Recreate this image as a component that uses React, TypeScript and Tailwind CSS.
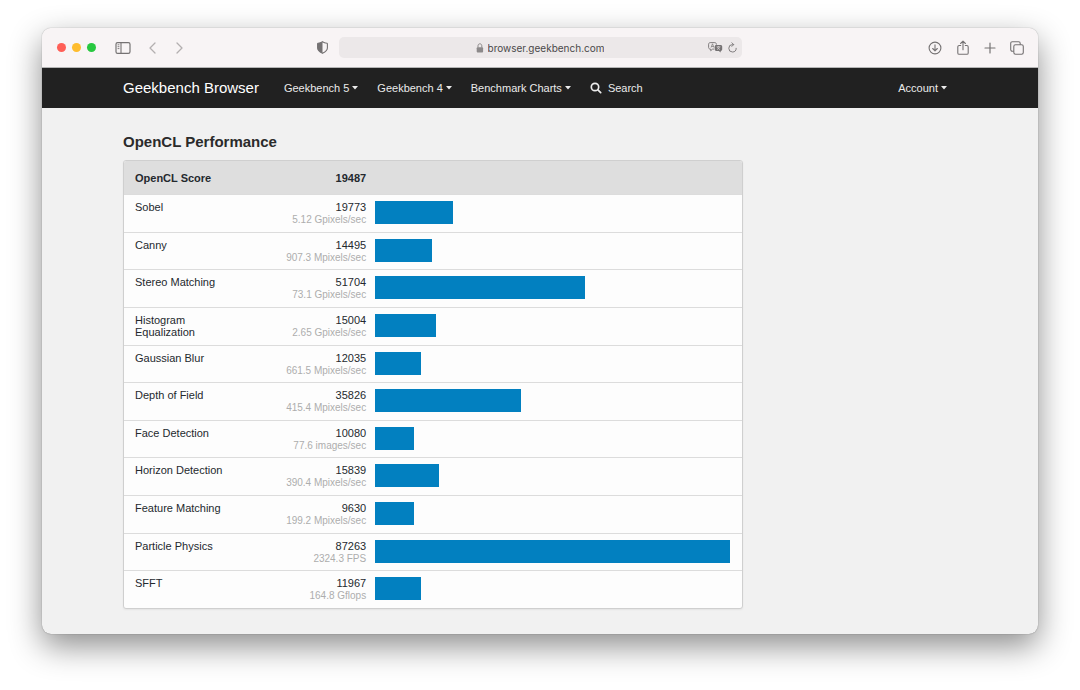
type Result = { name: string; score: number; rate: string };

const results: Result[] = [
  { name: "Sobel", score: 19773, rate: "5.12 Gpixels/sec" },
  { name: "Canny", score: 14495, rate: "907.3 Mpixels/sec" },
  { name: "Stereo Matching", score: 51704, rate: "73.1 Gpixels/sec" },
  { name: "Histogram Equalization", score: 15004, rate: "2.65 Gpixels/sec" },
  { name: "Gaussian Blur", score: 12035, rate: "661.5 Mpixels/sec" },
  { name: "Depth of Field", score: 35826, rate: "415.4 Mpixels/sec" },
  { name: "Face Detection", score: 10080, rate: "77.6 images/sec" },
  { name: "Horizon Detection", score: 15839, rate: "390.4 Mpixels/sec" },
  { name: "Feature Matching", score: 9630, rate: "199.2 Mpixels/sec" },
  { name: "Particle Physics", score: 87263, rate: "2324.3 FPS" },
  { name: "SFFT", score: 11967, rate: "164.8 Gflops" },
];

const maxScore = Math.max(...results.map(r => r.score));

const menus = ["Geekbench 5", "Geekbench 4", "Benchmark Charts"];

function MenuButton({ label }: { label: string }) {
  return (
    <button className="flex items-center gap-[3px] whitespace-nowrap">
      {label}
      <svg width="6" height="4" viewBox="0 0 6 4" fill="currentColor" aria-hidden="true"><path d="M0 0h6L3 3.4z" /></svg>
    </button>
  );
}

function Toolbar() {
  return (
    <div className="flex h-10 items-center border-b border-[#b5b5b5] bg-[#f8f4f5] text-[#757273]">
      <div className="flex flex-1 items-center pl-[15px] pr-[11px]">
        <div className="flex gap-[6px]">
          <button aria-label="Close" className="size-[9px] rounded-full bg-[#ff5f57]" />
          <button aria-label="Minimize" className="size-[9px] rounded-full bg-[#febc2e]" />
          <button aria-label="Zoom" className="size-[9px] rounded-full bg-[#28c840]" />
        </div>
        <button aria-label="Sidebar" className="ml-[19px]">
          <svg width="16" height="12" viewBox="0 0 16 12" fill="none" stroke="currentColor">
            <rect x="1" y="0.6" width="14" height="10.8" rx="1.6" strokeWidth="1.2" />
            <path d="M6 0.6v10.8" strokeWidth="1.1" />
            <path d="M2.6 2.8h1.8M2.6 4.7h1.8M2.6 6.6h1.8" strokeWidth="0.9" />
          </svg>
        </button>
        <div className="ml-[18px] flex gap-5 text-[#b3afb0]">
          <button aria-label="Back">
            <svg width="7" height="12" viewBox="0 0 7 12" fill="none" stroke="currentColor" strokeWidth="1.3" strokeLinecap="round" strokeLinejoin="round"><path d="M6 1 1 6l5 5" /></svg>
          </button>
          <button aria-label="Forward">
            <svg width="7" height="12" viewBox="0 0 7 12" fill="none" stroke="currentColor" strokeWidth="1.3" strokeLinecap="round" strokeLinejoin="round"><path d="m1 1 5 5-5 5" /></svg>
          </button>
        </div>
        <button aria-label="Privacy report" className="ml-auto">
          <svg width="11" height="13" viewBox="0 0 11 13" fill="none">
            <path d="M5.5.7C4.3 1.5 2.7 2 1 2.2.7 2.3.6 2.5.6 2.8v4.1c0 2.4 2.2 4 4.9 5.4 2.7-1.4 4.9-3 4.9-5.4V2.8c0-.3-.1-.5-.4-.6C8.3 2 6.7 1.5 5.5.7z" stroke="currentColor" strokeWidth="1.1" />
            <path d="M5.5.7C4.3 1.5 2.7 2 1 2.2c-.3.1-.4.3-.4.6v4.1c0 2.4 2.2 4 4.9 5.4z" fill="currentColor" />
          </svg>
        </button>
      </div>

      <div className="flex h-[21px] w-[403px] items-center rounded-[5px] bg-[#ece8e9] px-[5px]">
        <div className="w-8" />
        <label className="flex flex-1 items-center justify-center gap-1">
          <svg width="8" height="10" viewBox="0 0 8 10" fill="none" className="text-[#8c898a]" aria-hidden="true">
            <rect x="0.7" y="4.3" width="6.4" height="5.2" rx="0.9" fill="currentColor" />
            <path d="M2 4.6V2.8C2 1.6 2.8.8 3.9.8s1.9.8 1.9 2v1.8" stroke="currentColor" />
          </svg>
          <input
            type="text"
            aria-label="Address"
            defaultValue="browser.geekbench.com"
            className="field-sizing-content bg-transparent font-[Inter,sans-serif] text-[10px] leading-4 text-[#4b494a] outline-none"
          />
        </label>
        <div className="flex w-8 items-center justify-end gap-[5px]">
          <button aria-label="Translate">
            <svg width="15" height="11" viewBox="0 0 15 11" fill="none">
              <path d="M6 7.1H4.6L2.7 8.7V7.1h-.5C1.3 7.1.6 6.4.6 5.5V2.2C.6 1.3 1.3.6 2.2.6h4.6c.9 0 1.6.7 1.6 1.6v.5" stroke="currentColor" strokeWidth="0.9" strokeLinejoin="round" />
              <path d="m3 5.6 1.5-3.8L6 5.6M3.5 4.5h2" stroke="currentColor" strokeWidth="0.7" />
              <path d="M8.3 3h4.2c1 0 1.7.7 1.7 1.6v2.7c0 .9-.7 1.6-1.5 1.6v1.7L10.8 8.9H8.3c-.9 0-1.6-.7-1.6-1.6V4.6C6.7 3.7 7.4 3 8.3 3z" fill="currentColor" />
              <path d="M8.6 4.8h3.8M10.5 4v.8M11.6 4.9c-.4 1.2-1.3 2.1-2.6 2.7M9.4 5c.5 1.2 1.4 2.1 2.6 2.6" stroke="#ece8e9" strokeWidth="0.6" />
            </svg>
          </button>
          <button aria-label="Reload">
            <svg width="9" height="11" viewBox="0 0 9 11" fill="none" stroke="currentColor" strokeWidth="0.9" strokeLinecap="round" strokeLinejoin="round">
              <path d="M5.4 2.6H4.5A3.7 3.7 0 1 0 8.2 6.3" />
              <path d="m3.9.8 1.8 1.8-1.8 1.8" />
            </svg>
          </button>
        </div>
      </div>

      <div className="flex flex-1 items-center justify-end gap-[14px] pl-3 pr-[14px]">
        <button aria-label="Downloads">
          <svg width="14" height="14" viewBox="0 0 14 14" fill="none" stroke="currentColor" strokeWidth="1.1" strokeLinecap="round" strokeLinejoin="round">
            <circle cx="7" cy="7" r="5.9" />
            <path d="M7 3.9v5.8M4.7 7.5 7 9.8l2.3-2.3" />
          </svg>
        </button>
        <button aria-label="Share">
          <svg width="14" height="16" viewBox="0 0 14 16" fill="none" stroke="currentColor" strokeWidth="1.1" strokeLinecap="round" strokeLinejoin="round">
            <path d="M4.7 5.5H3.2c-.8 0-1.4.6-1.4 1.4v6c0 .8.6 1.4 1.4 1.4h7.6c.8 0 1.4-.6 1.4-1.4v-6c0-.8-.6-1.4-1.4-1.4H9.3" />
            <path d="M7 9.8V1.2M4.6 3.5 7 1.1l2.4 2.4" />
          </svg>
        </button>
        <button aria-label="New tab">
          <svg width="12" height="12" viewBox="0 0 12 12" fill="none" stroke="currentColor" strokeWidth="1.2" strokeLinecap="round"><path d="M6 1v10M1 6h10" /></svg>
        </button>
        <button aria-label="Tab overview">
          <svg width="14" height="14" viewBox="0 0 14 14" fill="none" stroke="currentColor" strokeWidth="1.1" strokeLinejoin="round">
            <rect x="3.8" y="3.8" width="9.5" height="9.5" rx="1.7" />
            <path d="M3.8 10.2H2.3C1.4 10.2.7 9.5.7 8.6V2.3C.7 1.4 1.4.7 2.3.7h6.3c.9 0 1.6.7 1.6 1.6v1.5" />
          </svg>
        </button>
      </div>
    </div>
  );
}

function Navbar() {
  return (
    <nav className="bg-[#212121] text-[11px] text-[#ebebeb]">
      <div className="mx-auto flex h-10 max-w-[834px] items-center pr-[10px]">
        <a href="#" className="mr-[25px] whitespace-nowrap text-[15px] font-medium text-white">Geekbench Browser</a>
        <div className="flex items-center gap-[19px]">
          {menus.map(m => <MenuButton key={m} label={m} />)}
          <a href="#search" className="flex items-center gap-[6px]">
            <svg width="12" height="12" viewBox="0 0 12 12" fill="none" stroke="currentColor" strokeWidth="1.7" strokeLinecap="round" aria-hidden="true">
              <circle cx="5" cy="5" r="3.7" />
              <path d="m7.9 7.9 2.8 2.8" />
            </svg>
            Search
          </a>
        </div>
        <div className="ml-auto">
          <MenuButton label="Account" />
        </div>
      </div>
    </nav>
  );
}

function ScoreTable() {
  return (
    <div className="w-full max-w-[620px] overflow-hidden rounded-[3px] border border-[#cfcfcf] bg-[#fdfdfd] shadow-[0_1px_2px_rgba(0,0,0,0.06)]">
      <table className="h-[447px] w-full table-fixed border-separate border-spacing-0 text-[11px] leading-3 text-[#24292e]">
        <colgroup>
          <col className="w-1/5" />
          <col className="w-1/5" />
          <col />
        </colgroup>
        <thead>
          <tr className="h-[33px] bg-[#dedede]">
            <th className="px-[11px] text-left font-bold">OpenCL Score</th>
            <th className="pr-[5px] text-right font-bold">19487</th>
            <td />
          </tr>
        </thead>
        <tbody>
          {results.map(r => (
            <tr key={r.name}>
              <td className="border-t border-[#dcdcdc] px-[11px] pb-[5px] pt-[6px] align-top">{r.name}</td>
              <td className="border-t border-[#dcdcdc] pb-[5px] pr-[5px] pt-[6px] text-right align-top">
                {r.score}
                <span className="block text-[10px] leading-[13px] text-[#adadad]">{r.rate}</span>
              </td>
              <td className="border-t border-[#dcdcdc] pb-[5px] pl-1 pr-3 pt-[6px] align-top">
                <div className="h-[23px] bg-[#0280c0]" style={{ width: `${Math.floor((r.score / maxScore) * 100)}%` }} />
              </td>
            </tr>
          ))}
        </tbody>
      </table>
    </div>
  );
}

export default function App() {
  return (
    <div className="min-h-screen bg-white px-[42px] pb-14 pt-7 font-['Liberation_Sans',Arial,sans-serif]">
      <div className="overflow-hidden rounded-[9px] bg-[#f1f1f1] shadow-[0_0_1px_rgba(0,0,0,0.5),0_12px_32px_rgba(0,0,0,0.45)]">
        <Toolbar />
        <Navbar />
        <main className="mx-auto max-w-[834px] pb-[25px] pt-6">
          <h1 className="mb-2 text-[15px] font-bold leading-5 text-[#2b2b2b]">OpenCL Performance</h1>
          <ScoreTable />
        </main>
      </div>
    </div>
  );
}
